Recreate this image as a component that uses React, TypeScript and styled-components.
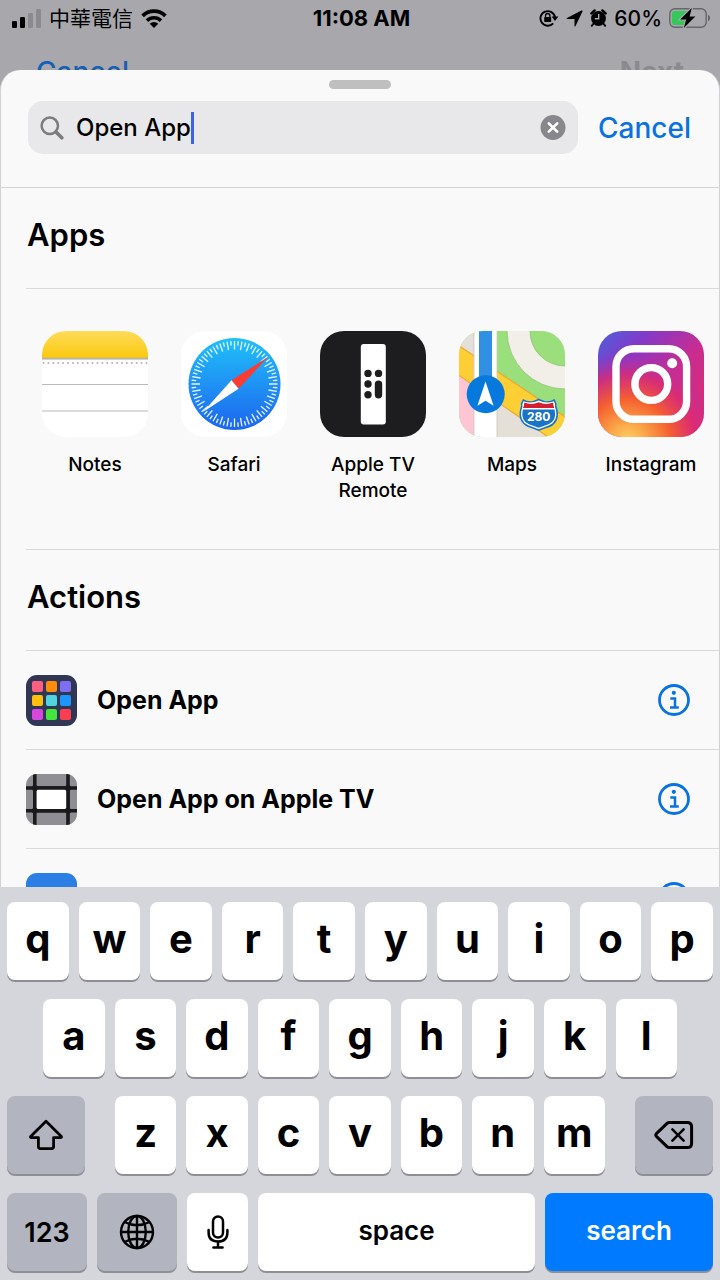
import { ReactNode, useState } from 'react';
import styled, { createGlobalStyle } from 'styled-components';

const apps = [
	{ name: 'Notes', icon: <NotesIcon /> },
	{ name: 'Safari', icon: <SafariIcon /> },
	{ name: 'Apple TV Remote', icon: <RemoteIcon /> },
	{ name: 'Maps', icon: <MapsIcon /> },
	{ name: 'Instagram', icon: <InstagramIcon /> },
];

const actions = [
	{ name: 'Open App', icon: <GridIcon /> },
	{ name: 'Open App on Apple TV', icon: <TvIcon /> },
	{ name: '', icon: <BlueIcon /> },
];

const App = () => {
	const [query, setQuery] = useState('Open App');

	return (
		<Screen>
			<GlobalStyle />
			<StatusBar>
				<StatusGroup>
					<SignalIcon />
					<Carrier>中華電信</Carrier>
					<WifiIcon />
				</StatusGroup>
				<Clock>11:08 AM</Clock>
				<StatusGroup $end>
					<LockIcon />
					<LocationIcon />
					<AlarmIcon />
					<Percent>60%</Percent>
					<BatteryIcon />
				</StatusGroup>
			</StatusBar>
			<BackNav aria-hidden>
				<span>Cancel</span>
				<BackNext>Next</BackNext>
			</BackNav>

			<Sheet>
				<SheetHeader>
					<Handle />
					<SearchRow>
						<SearchBox>
							<SearchIcon />
							<SearchInput
								aria-label="Search"
								value={query}
								onChange={(e) => setQuery(e.target.value)}
							/>
							<Caret />
							<ClearButton aria-label="Clear text" onClick={() => setQuery('')}>
								<ClearIcon />
							</ClearButton>
						</SearchBox>
						<CancelButton>Cancel</CancelButton>
					</SearchRow>
				</SheetHeader>

				<Section>
					<Heading>Apps</Heading>
					<AppList>
						{apps.map((app) => (
							<AppButton key={app.name}>
								{app.icon}
								<AppName>{app.name}</AppName>
							</AppButton>
						))}
					</AppList>
				</Section>
				<Section>
					<Heading>Actions</Heading>
					<ActionList>
						{actions.map((action) => (
							<ActionRow key={action.name}>
								<ActionButton aria-label={action.name || 'More'}>
									{action.icon}
									{action.name}
								</ActionButton>
								<InfoButton aria-label="Info">
									<InfoIcon />
								</InfoButton>
							</ActionRow>
						))}
					</ActionList>
				</Section>
			</Sheet>

			<Keyboard>
				<KeyRow>
					<Letters text="qwertyuiop" />
				</KeyRow>
				<KeyRow $inset>
					<Letters text="asdfghjkl" />
				</KeyRow>
				<KeyRow>
					<SideKey aria-label="Shift" $side="left">
						<ShiftIcon />
					</SideKey>
					<Letters text="zxcvbnm" />
					<SideKey aria-label="Delete" $side="right">
						<DeleteIcon />
					</SideKey>
				</KeyRow>
				<KeyRow>
					<FunctionKey>123</FunctionKey>
					<FunctionKey aria-label="Next keyboard">
						<GlobeIcon />
					</FunctionKey>
					<MicKey aria-label="Dictate">
						<MicIcon />
					</MicKey>
					<SpaceKey>space</SpaceKey>
					<SearchKey>search</SearchKey>
				</KeyRow>
			</Keyboard>
		</Screen>
	);
};

export default App;

const Letters = ({ text }: { text: string }) => (
	<>
		{text.split('').map((letter) => (
			<LetterKey key={letter}>{letter}</LetterKey>
		))}
	</>
);

/* status bar icons */

function SignalIcon() {
	return (
		<svg width="29" height="19" viewBox="0 0 29 19">
			<rect x="0" y="12" width="5" height="7" rx="1.3" />
			<rect x="8" y="8" width="5" height="11" rx="1.3" />
			<rect x="16" y="4" width="5" height="15" rx="1.3" fill="#8b8a8f" />
			<rect x="24" y="0" width="5" height="19" rx="1.3" fill="#8b8a8f" />
		</svg>
	);
}

function WifiIcon() {
	return (
		<svg width="26" height="19" viewBox="0 0 26 19">
			<path d="M1.6 6.9 A16.2 16.2 0 0 1 24.4 6.9" fill="none" stroke="#000" strokeWidth="3.8" />
			<path d="M6 11.6 A10 10 0 0 1 20 11.6" fill="none" stroke="#000" strokeWidth="3.6" />
			<path d="M13 19 L8.7 14.7 A6.2 6.2 0 0 1 17.3 14.7 Z" />
		</svg>
	);
}

function LockIcon() {
	return (
		<svg width="20" height="18" viewBox="0 0 20 18">
			<path d="M14.2 14.3 A7.3 7.3 0 1 1 16 8.4" fill="none" stroke="#000" strokeWidth="1.9" />
			<path d="M12.6 7.6 H19.4 L16 12 Z" />
			<rect x="5.2" y="7.9" width="7" height="5.2" rx="0.8" />
			<path d="M6.5 8.2 V6.7 a2.2 2.2 0 0 1 4.4 0 V8.2" fill="none" stroke="#000" strokeWidth="1.3" />
		</svg>
	);
}

function LocationIcon() {
	return (
		<svg width="17" height="17" viewBox="0 0 17 17">
			<path d="M0.6 8.2 L15.4 0.5 Q17 0 16.5 1.6 L9.4 16.2 Q8.7 17 8.5 16 V8.9 H1 Q0 8.8 0.6 8.2 Z" />
		</svg>
	);
}

function AlarmIcon() {
	return (
		<svg width="17" height="18" viewBox="0 0 17 18">
			<circle cx="8.5" cy="9.5" r="7.4" />
			<path d="M1.4 4.4 L4.6 1.4 M15.6 4.4 L12.4 1.4" stroke="#000" strokeWidth="2.4" strokeLinecap="round" />
			<path d="M3.6 14.5 L1.8 16.8 M13.4 14.5 L15.2 16.8" stroke="#000" strokeWidth="2" strokeLinecap="round" />
			<path d="M8.7 5 V9.8 H4.8" fill="none" stroke="#a8a7ac" strokeWidth="1.4" />
		</svg>
	);
}

function BatteryIcon() {
	return (
		<svg width="42" height="22" viewBox="0 0 42 22">
			<rect x="0.8" y="1.8" width="36.4" height="18.4" rx="5" fill="none" stroke="#66666b" strokeWidth="1.4" />
			<path d="M39 7.8 Q41.2 8.6 41.2 11 Q41.2 13.4 39 14.2 Z" fill="#66666b" />
			<path d="M6 4 H20 V18 H6 Q3 18 3 15 V7 Q3 4 6 4 Z" fill="#34c759" />
			<path
				d="M22.8 1 L11.2 12.4 H17.2 L14.8 21 L26.4 9.6 H20.6 Z"
				stroke="#a8a7ac"
				strokeWidth="2.4"
				paintOrder="stroke"
			/>
		</svg>
	);
}

/* search field icons */

function SearchIcon() {
	return (
		<svg width="24" height="24" viewBox="0 0 24 24" fill="none" stroke="#7c7c80">
			<circle cx="9.8" cy="9.8" r="8.2" strokeWidth="2.5" />
			<path d="M16 16 L21.8 21.8" strokeWidth="3.6" strokeLinecap="round" />
		</svg>
	);
}

function ClearIcon() {
	return (
		<svg width="26" height="26" viewBox="0 0 26 26">
			<circle cx="13" cy="12.5" r="12.5" fill="#88888c" />
			<path d="M8.8 8.3 L17.2 16.7 M17.2 8.3 L8.8 16.7" stroke="#fff" strokeWidth="2.6" strokeLinecap="round" />
		</svg>
	);
}

/* app icons */

function AppSvg({ children }: { children: ReactNode }) {
	return (
		<AppTile>
			<svg width="106" height="106" viewBox="0 0 106 106">
				{children}
			</svg>
		</AppTile>
	);
}

function NotesIcon() {
	return (
		<AppSvg>
			<defs>
				<linearGradient id="notes" x1="0" y1="0" x2="0" y2="1">
					<stop offset="0" stopColor="#fedb5c" />
					<stop offset="1" stopColor="#fbc90c" />
				</linearGradient>
			</defs>
			<rect width="106" height="106" fill="#fff" />
			<rect width="106" height="27" fill="url(#notes)" />
			<rect y="26.6" width="106" height="2" fill="#b9b4a4" />
			<path d="M1.5 32 H106" stroke="#b4b4b6" strokeWidth="1.9" strokeLinecap="round" strokeDasharray="0.1 4.8" />
			<path d="M0 53.5 H106 M0 80 H106" stroke="#bababc" strokeWidth="1.2" />
		</AppSvg>
	);
}

function SafariIcon() {
	const ticks = Array.from({ length: 72 }, (_, i) => i);
	return (
		<AppSvg>
			<defs>
				<linearGradient id="safari" x1="0" y1="0" x2="0" y2="1">
					<stop offset="0" stopColor="#1fc1f8" />
					<stop offset="0.5" stopColor="#1f92f4" />
					<stop offset="1" stopColor="#1d65ee" />
				</linearGradient>
			</defs>
			<rect width="106" height="106" fill="#fff" />
			<circle cx="53.5" cy="53" r="46" fill="url(#safari)" />
			{ticks.map((i) => (
				<path
					key={i}
					d={i % 2 ? 'M53.5 10 V14.5' : 'M53.5 10 V18.5'}
					stroke="#e6f5ff"
					strokeWidth="1.3"
					transform={`rotate(${i * 5} 53.5 53)`}
				/>
			))}
			<path d="M87 26 L50.5 49.3 L57.5 57.7 Z" fill="#fd3b30" />
			<path d="M22 81 L50.5 49.3 L57.5 57.7 Z" fill="#fff" />
		</AppSvg>
	);
}

function RemoteIcon() {
	return (
		<AppSvg>
			<rect width="106" height="106" fill="#1d1d1f" />
			<rect x="40.8" y="13" width="25" height="80.4" rx="3" fill="#fff" />
			<g fill="#1d1d1f">
				<circle cx="48" cy="42.4" r="3.7" />
				<circle cx="58.5" cy="42.4" r="3.7" />
				<circle cx="48" cy="53" r="3.7" />
				<circle cx="48" cy="63.7" r="3.7" />
				<rect x="54.8" y="49.4" width="7.4" height="18" rx="3.7" />
			</g>
		</AppSvg>
	);
}

function MapsIcon() {
	return (
		<AppSvg>
			<rect width="106" height="106" fill="#9bdf7c" />
			<circle cx="106" cy="0" r="58" fill="#f2eee8" stroke="#8ac46f" strokeWidth="0.8" />
			<circle cx="106" cy="0" r="35" fill="#9bdf7c" stroke="#8ac46f" strokeWidth="0.8" />
			<rect width="16" height="40" fill="#e3e0d9" />
			<path d="M0 40 L16 50 V106 H0 Z" fill="#fec6d4" />
			<path d="M38 60 L95 106 H38 Z" fill="#e4e0d8" />
			<path
				d="M-2 13.5 L108 87 V119 L-2 43 Z"
				fill="#fecf35"
				stroke="#eda92b"
				strokeWidth="1.2"
			/>
			<rect x="15" y="-2" width="23" height="110" fill="#fff" stroke="#c9c5bb" strokeWidth="0.8" />
			<rect x="20" width="13" height="60" fill="#3290e2" />
			<circle cx="26.7" cy="63.3" r="19" fill="#0879dc" />
			<path d="M26.5 50.5 L34.6 74.8 L26.5 69.7 L18.4 74.8 Z" fill="#fff" />
			<path
				d="M64 68 Q69.5 71.5 74.5 69.8 Q77 69 79.7 67.5 Q82.4 69 85 69.8 Q90 71.5 95.5 68 L97.6 72.5 Q96.8 75 98.5 78.5 Q101 91 91 96 Q84 98 79.7 100 Q75 98 69 96 Q58.5 91 61 78.5 Q62.6 75 61.8 72.5 Z"
				fill="#1974c6"
			/>
			<path
				d="M64.6 70.2 Q72 73.2 79.7 69.6 Q87.5 73.2 94.8 70.2 L96 72.8 Q95.6 76 97 79 Q99.3 90 90.3 94.3 L79.7 98.2 L69.2 94.3 Q60.2 90 62.4 79 Q63.9 76 63.4 72.8 Z"
				fill="#fff"
			/>
			<path d="M65.3 71.6 Q72.5 74.5 79.7 71.2 Q87 74.5 94.1 71.6 Q94.2 75 95.4 77 H64 Q65.2 75 65.3 71.6 Z" fill="#d51f30" />
			<path d="M63.8 78.5 H95.6 Q98 89.6 89.6 93.2 L79.7 96.8 L69.9 93.2 Q61.5 89.6 63.8 78.5 Z" fill="#1974c6" />
			<ShieldText x="79.7" y="90">
				280
			</ShieldText>
		</AppSvg>
	);
}

function InstagramIcon() {
	return (
		<AppSvg>
			<defs>
				<linearGradient id="igBase" x1="0" y1="0" x2="1" y2="1">
					<stop offset="0" stopColor="#4a62dc" />
					<stop offset="0.25" stopColor="#8439c8" />
					<stop offset="0.55" stopColor="#c92c90" />
					<stop offset="1" stopColor="#e02a6e" />
				</linearGradient>
				<radialGradient id="igWarm" cx="0.28" cy="1.05" r="0.85">
					<stop offset="0" stopColor="#fdd56d" />
					<stop offset="0.18" stopColor="#fcae4c" />
					<stop offset="0.48" stopColor="#f5602f" />
					<stop offset="0.75" stopColor="#dc2c70" stopOpacity="0.8" />
					<stop offset="1" stopColor="#b52fae" stopOpacity="0" />
				</radialGradient>
			</defs>
			<rect width="106" height="106" fill="url(#igBase)" />
			<rect width="106" height="106" fill="url(#igWarm)" />
			<g fill="none" stroke="#fff" strokeWidth="7.4">
				<rect x="18" y="17.7" width="70.6" height="70.6" rx="18" />
				<circle cx="53.3" cy="53" r="16.4" />
			</g>
			<circle cx="74.2" cy="32.3" r="5" fill="#fff" />
		</AppSvg>
	);
}

/* action icons */

function GridIcon() {
	const colors = [
		'#ff5f7e', '#ff8c0a', '#7d6ff0',
		'#fdc010', '#50d5e0', '#1e95fb',
		'#d648dc', '#44e63c', '#fd3e50',
	];
	return (
		<ActionTile>
			<svg width="51" height="51" viewBox="0 0 51 51">
				<rect width="51" height="51" fill="#303754" />
				{colors.map((color, i) => (
					<rect
						key={color}
						x={6 + (i % 3) * 14}
						y={6 + Math.floor(i / 3) * 14}
						width="11"
						height="11"
						rx="2"
						fill={color}
					/>
				))}
			</svg>
		</ActionTile>
	);
}

function TvIcon() {
	return (
		<ActionTile>
			<svg width="51" height="51" viewBox="0 0 51 51">
				<rect width="51" height="51" fill="#8f8e94" />
				<path d="M8.8 0 V51 M42 0 V51 M0 14 H51 M0 36.7 H51" stroke="#1a1a1c" strokeWidth="3.6" />
				<rect x="8.8" y="14" width="33.2" height="22.7" rx="3" fill="#fff" stroke="#1a1a1c" strokeWidth="3.6" />
				<g fill="#1a1a1c">
					<circle cx="8.8" cy="14" r="3" />
					<circle cx="42" cy="14" r="3" />
					<circle cx="8.8" cy="36.7" r="3" />
					<circle cx="42" cy="36.7" r="3" />
				</g>
			</svg>
		</ActionTile>
	);
}

function BlueIcon() {
	return (
		<ActionTile>
			<svg width="51" height="51" viewBox="0 0 51 51">
				<rect width="51" height="51" fill="#2a7ee4" />
			</svg>
		</ActionTile>
	);
}

function InfoIcon() {
	return (
		<svg width="32" height="32" viewBox="0 0 32 32" fill="none" stroke="#0a72e0">
			<circle cx="16" cy="16" r="14.5" strokeWidth="2.8" />
			<circle cx="15.8" cy="8.8" r="2.1" fill="#0a72e0" stroke="none" />
			<path d="M12.3 14.4 H17 V23.2 M12 23.4 H20.8" strokeWidth="2.5" />
		</svg>
	);
}

/* keyboard icons */

function ShiftIcon() {
	return (
		<svg width="36" height="32" viewBox="0 0 36 32" fill="none" stroke="#000" strokeWidth="2.8">
			<path
				d="M18 2.2 L33.4 17.4 Q33.8 18.6 32.6 18.6 H25.6 V27.6 Q25.6 29.6 23.6 29.6 H12.4 Q10.4 29.6 10.4 27.6 V18.6 H3.4 Q2.2 18.6 2.6 17.4 Z"
				strokeLinejoin="round"
			/>
		</svg>
	);
}

function DeleteIcon() {
	return (
		<svg width="40" height="30" viewBox="0 0 40 30" fill="none" stroke="#000" strokeLinecap="round" strokeLinejoin="round">
			<path
				d="M15.4 2.4 H33.2 Q37.6 2.4 37.6 6.8 V23.2 Q37.6 27.6 33.2 27.6 H15.4 Q14 27.6 13 26.6 L2.4 16.3 Q1.2 15 2.4 13.7 L13 3.4 Q14 2.4 15.4 2.4 Z"
				strokeWidth="3"
			/>
			<path d="M18.4 9.4 L29.6 20.6 M29.6 9.4 L18.4 20.6" strokeWidth="2.6" />
		</svg>
	);
}

function GlobeIcon() {
	return (
		<svg width="36" height="36" viewBox="0 0 36 36" fill="none" stroke="#000" strokeWidth="2.4">
			<circle cx="18" cy="18" r="16" />
			<ellipse cx="18" cy="18" rx="8.8" ry="16" />
			<path d="M18 2 V34 M2 18 H34 M5.5 8 Q18 14.5 30.5 8 M5.5 28 Q18 21.5 30.5 28" />
		</svg>
	);
}

function MicIcon() {
	return (
		<svg width="22" height="34" viewBox="0 0 22 34" fill="none" stroke="#000" strokeWidth="2.5" strokeLinecap="round">
			<rect x="6" y="1.4" width="10" height="21.2" rx="5" />
			<path d="M1.6 15 V17.6 Q1.6 26.6 11 26.6 Q20.4 26.6 20.4 17.6 V15 M11 26.6 V32 M6.4 32.4 H15.6" />
		</svg>
	);
}

const GlobalStyle = createGlobalStyle`
	* {
		box-sizing: border-box;
	}
	body {
		margin: 0;
		font-family: Inter, "Noto Sans CJK TC", sans-serif;
		color: #000;
	}
	button, input {
		font: inherit;
		color: inherit;
		border: none;
		background: none;
		padding: 0;
		margin: 0;
	}
	svg {
		display: block;
		flex-shrink: 0;
	}
`;

const Screen = styled.div`
	height: 100vh;
	display: flex;
	flex-direction: column;
	background-color: #a8a7ac;
	overflow: hidden;
`;

const StatusBar = styled.header`
	display: grid;
	grid-template-columns: 1fr auto 1fr;
	align-items: center;
	height: 36px;
	padding: 0 9px 0 12px;
	font-size: 21px;
`;

const StatusGroup = styled.div<{ $end?: boolean }>`
	display: flex;
	align-items: center;
	gap: ${(props) => (props.$end ? '7px' : '8px')};
	justify-content: ${(props) => (props.$end ? 'flex-end' : 'flex-start')};
`;

const Carrier = styled.span`
	font-family: 'Noto Sans CJK TC', sans-serif;
	line-height: 24px;
	margin-bottom: 2px;
`;

const Clock = styled.span`
	font-size: 22px;
	font-weight: 700;
`;

const Percent = styled.span`
	font-weight: 500;
`;

const BackNav = styled.div`
	display: flex;
	flex: none;
	justify-content: space-between;
	padding: 19px 36px 0;
	margin-bottom: -19px;
	font-size: 28px;
	line-height: 34px;
	font-weight: 500;
	color: #1560b4;
`;

const BackNext = styled.span`
	font-weight: 700;
	color: #8b8a8f;
`;

/* slides over the navigation bar behind it */
const Sheet = styled.main`
	position: relative;
	flex: 1;
	min-height: 0;
	overflow: hidden;
	border: solid #d2d2d5;
	border-width: 0 1px;
	border-radius: 20px 20px 0 0;
	background-color: #f9f9f9;
`;

const SheetHeader = styled.div`
	padding: 10px 28px 33px 27px;
	border-bottom: 1px solid #d3d3d5;
`;

const Handle = styled.div`
	width: 62px;
	height: 9px;
	margin: 0 auto 12px;
	border-radius: 5px;
	background-color: #bfbfc0;
`;

const SearchRow = styled.div`
	display: flex;
	align-items: center;
	gap: 20px;
`;

const SearchBox = styled.div`
	flex: 1;
	display: flex;
	align-items: center;
	height: 53px;
	padding: 0 12px 0 12px;
	border-radius: 15px;
	background-color: #e8e8ea;
`;

const SearchInput = styled.input`
	field-sizing: content;
	min-width: 0;
	margin-left: 12px;
	font-size: 24px;
	font-weight: 500;
	outline: none;
	caret-color: transparent;
`;

const Caret = styled.span`
	width: 3px;
	height: 32px;
	background-color: #3f63dc;
`;

const ClearButton = styled.button`
	margin-left: auto;
`;

const CancelButton = styled.button`
	font-size: 28px;
	font-weight: 500;
	color: #0a72e0;
`;

const Section = styled.section`
	margin-left: 25px;
`;

const Heading = styled.h2`
	display: flex;
	align-items: center;
	height: 101px;
	margin: 0;
	padding: 0 0 8px 1px;
	border-bottom: 1px solid #d9d9db;
	font-size: 31px;
	font-weight: 600;
`;

const AppList = styled.div`
	display: flex;
	gap: 33px;
	padding: 42px 0 45px 16px;
	border-bottom: 1px solid #d9d9db;
	overflow: hidden;
`;

const AppButton = styled.button`
	display: flex;
	flex-direction: column;
	flex: none;
	align-items: center;
	gap: 15px;
	width: 106px;
`;

const AppTile = styled.span`
	border-radius: 24px;
	overflow: hidden;
`;

const AppName = styled.span`
	font-size: 19px;
	line-height: 26px;
	font-weight: 500;
`;

const ShieldText = styled.text`
	font-size: 12px;
	font-weight: 700;
	text-anchor: middle;
	fill: #fff;
`;

const ActionList = styled.ul`
	margin: 0;
	padding: 0;
	list-style: none;
`;

const ActionRow = styled.li`
	display: flex;
	align-items: center;
	height: 99px;
	padding-right: 29px;
	border-bottom: 1px solid #d9d9db;
`;

const ActionButton = styled.button`
	flex: 1;
	display: flex;
	align-items: center;
	gap: 20px;
	font-size: 25px;
	font-weight: 700;
`;

const ActionTile = styled.span`
	border-radius: 11px;
	overflow: hidden;
`;

const InfoButton = styled.button`
	flex: none;
`;

const Keyboard = styled.div`
	display: flex;
	flex: none;
	flex-direction: column;
	gap: 19px;
	padding: 15px 7px 9px;
	background-color: #d4d6dc;
`;

const KeyRow = styled.div<{ $inset?: boolean }>`
	display: flex;
	gap: 10px;
	padding: ${(props) => (props.$inset ? '0 36px' : '0')};
`;

const Key = styled.button`
	display: flex;
	align-items: center;
	justify-content: center;
	height: 78px;
	border-radius: 8px;
	background-color: #fff;
	box-shadow: 0 2px 0 #8d8f94;
	font-size: 26px;
	font-weight: 600;
`;

const LetterKey = styled(Key)`
	flex: 1;
	min-width: 0;
	padding-bottom: 6px;
	font-size: 40px;
	font-weight: 700;
`;

const SideKey = styled(Key)<{ $side: 'left' | 'right' }>`
	flex: none;
	width: 78px;
	margin-${(props) => (props.$side === 'left' ? 'right' : 'left')}: 20px;
	background-color: #b2b5bf;
`;

const FunctionKey = styled(Key)`
	flex: none;
	width: 80px;
	background-color: #b2b5bf;
	font-size: 27px;
`;

const MicKey = styled(Key)`
	flex: none;
	width: 61px;
`;

const SpaceKey = styled(Key)`
	flex: 1;
	padding-bottom: 4px;
`;

const SearchKey = styled(SpaceKey)`
	flex: none;
	width: 168px;
	background-color: #007aff;
	color: #fff;
`;
